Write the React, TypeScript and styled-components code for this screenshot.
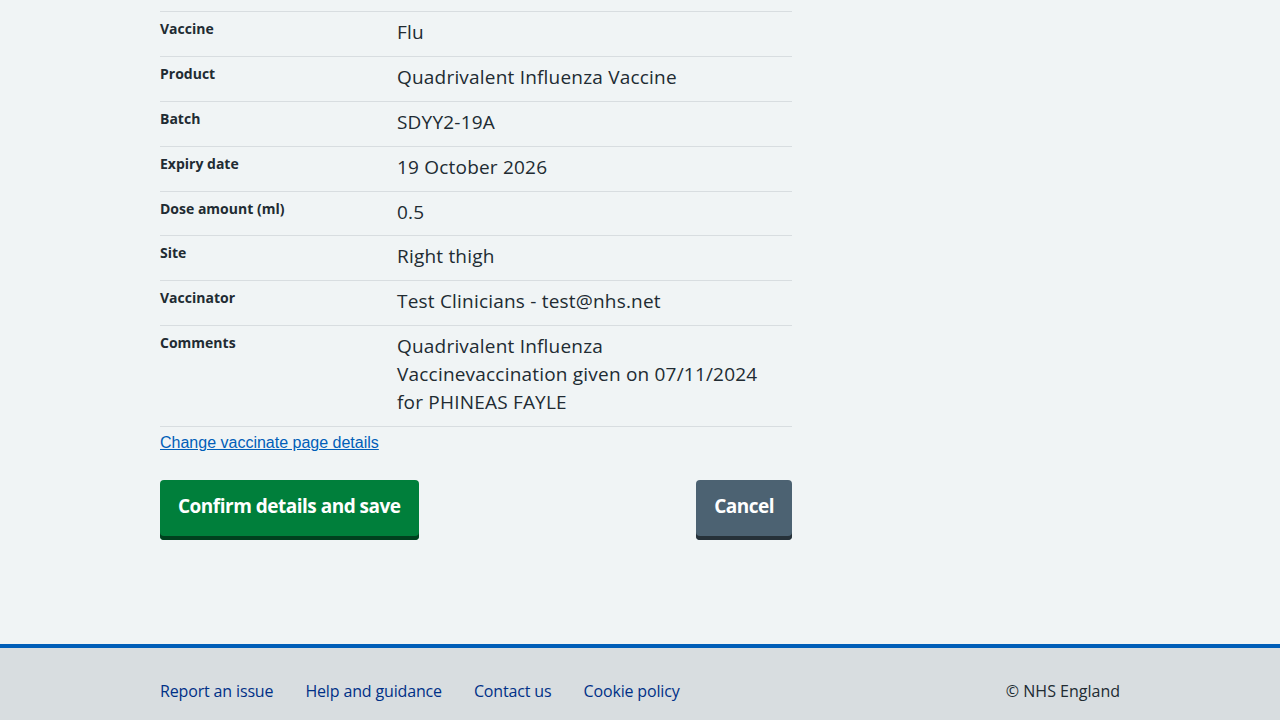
import styled, { createGlobalStyle } from 'styled-components'

const GlobalStyle = createGlobalStyle`
    html, body {
        margin: 0;
        padding: 0;
        background-color: #f0f4f5;
    }
    body {
        font-family: 'Open Sans', 'Noto Sans', Arial, sans-serif;
        color: #212b32;
    }
`

const Page = styled.div`
    display: flex;
    flex-direction: column;
`

const Main = styled.main`
    width: 960px;
    margin: 0 auto;
    padding-top: 11px;
    padding-bottom: 104px;
`

const Column = styled.div`
    width: 632px;
`

const SummaryList = styled.dl`
    margin: 0;
    border-top: 1px solid #d8dde0;
`

const Row = styled.div`
    display: flex;
    border-bottom: 1px solid #d8dde0;
    padding: 6px 0 9.875px;
`

const Key = styled.dt`
    width: 237px;
    flex-shrink: 0;
    font-size: 14px;
    font-weight: 700;
    line-height: 22px;
`

const Value = styled.dd`
    margin: 0;
    padding-right: 22px;
    font-size: 19px;
    line-height: 28px;
    letter-spacing: 0.2px;
`

const ChangeLink = styled.a`
    display: inline-block;
    margin-top: 6px;
    font-family: 'Liberation Sans', Arial, sans-serif;
    font-size: 16px;
    line-height: 20px;
    color: #005eb8;
    text-decoration: underline;
`

const Actions = styled.div`
    display: flex;
    justify-content: space-between;
    margin-top: 27px;
`

const Button = styled.button<{ $secondary?: boolean }>`
    font-family: inherit;
    font-size: 19px;
    font-weight: 700;
    letter-spacing: -0.5px;
    color: #fff;
    border: none;
    border-radius: 4px;
    height: 60px;
    padding: 0 18px 8px;
    background-color: ${(p) => (p.$secondary ? '#4c6272' : '#007f3b')};
    box-shadow: inset 0 -4px 0 ${(p) => (p.$secondary ? '#263139' : '#00401e')};
    cursor: pointer;
`

const Footer = styled.footer`
    background-color: #d8dde0;
    border-top: 4px solid #005eb8;
`

const FooterInner = styled.div`
    width: 960px;
    margin: 0 auto;
    height: 84px;
    display: flex;
    align-items: center;
    justify-content: space-between;
    padding-top: 2px;
    box-sizing: border-box;
`

const FooterLinks = styled.ul`
    list-style: none;
    margin: 0;
    padding: 0;
    display: flex;
    gap: 32px;
`

const FooterLink = styled.a`
    font-size: 16px;
    color: #003087;
    text-decoration: none;
    letter-spacing: -0.15px;
`

const Copyright = styled.p`
    margin: 0;
    font-size: 16px;
    color: #212b32;
`

const rows: [string, string][] = [
    ['Vaccine', 'Flu'],
    ['Product', 'Quadrivalent Influenza Vaccine'],
    ['Batch', 'SDYY2-19A'],
    ['Expiry date', '19 October 2026'],
    ['Dose amount (ml)', '0.5'],
    ['Site', 'Right thigh'],
    ['Vaccinator', 'Test Clinicians - test@nhs.net'],
    [
        'Comments',
        'Quadrivalent Influenza Vaccinevaccination given on 07/11/2024 for PHINEAS FAYLE',
    ],
]

const footerLinks = ['Report an issue', 'Help and guidance', 'Contact us', 'Cookie policy']

function App() {
    return (
        <Page>
            <GlobalStyle />
            <Main>
                <Column>
                    <SummaryList>
                        {rows.map(([key, value]) => (
                            <Row key={key}>
                                <Key>{key}</Key>
                                <Value>{value}</Value>
                            </Row>
                        ))}
                    </SummaryList>
                    <ChangeLink href="#">Change vaccinate page details</ChangeLink>
                    <Actions>
                        <Button>Confirm details and save</Button>
                        <Button $secondary>Cancel</Button>
                    </Actions>
                </Column>
            </Main>
            <Footer>
                <FooterInner>
                    <FooterLinks>
                        {footerLinks.map((l) => (
                            <li key={l}>
                                <FooterLink href="#">{l}</FooterLink>
                            </li>
                        ))}
                    </FooterLinks>
                    <Copyright>© NHS England</Copyright>
                </FooterInner>
            </Footer>
        </Page>
    )
}

export default App
